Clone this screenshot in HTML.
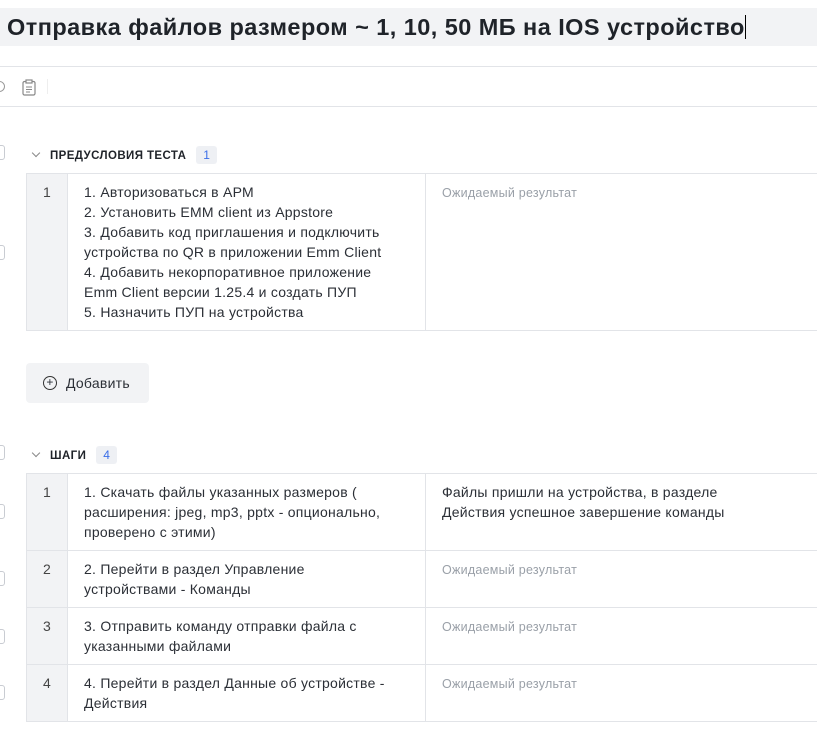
<!DOCTYPE html>
<html><head><meta charset="utf-8"><style>
*{margin:0;padding:0;box-sizing:border-box}
body{width:817px;height:738px;overflow:hidden;background:#fff;font-family:"Liberation Sans","Noto Sans CJK SC",sans-serif;color:#2b2f36;position:relative}
.title{position:absolute;left:0;top:8px;width:817px;height:38px;background:#f2f3f5;font-size:23.5px;font-weight:bold;color:#1f2329;padding:6px 0 0 7px;white-space:nowrap;letter-spacing:.45px}
.cursor{display:inline-block;width:1px;height:24px;background:#000;vertical-align:-4px}
.hl{position:absolute;left:0;width:817px;height:1px;background:#e2e4e8}
.cb{position:absolute;left:-10px;width:15px;height:15px;border:1px solid #c9ccd2;border-radius:3px}
.sec{position:absolute;left:33px;font-size:11.5px;font-weight:bold;color:#1f2329;letter-spacing:.4px}
.sec .chev{display:inline-block;width:6px;height:6px;border-right:1px solid #888;border-bottom:1px solid #888;transform:rotate(45deg);margin:0 11px 3px 0}
.badge{display:inline-block;background:#eef0f4;color:#3a6ee8;font-weight:normal;font-size:12px;padding:2px 7px;margin-left:10px;border-radius:3px}
table{position:absolute;left:26px;width:800px;border-collapse:collapse;font-size:14px;line-height:20px;letter-spacing:.25px}
td{border:1px solid #e2e4e8;vertical-align:top}
td.n{width:41px;background:#f2f3f5;text-align:center;padding-top:8px;color:#444}
td.t{width:358px;padding:8px 16px}
td.r{padding:8px 16px}
.ph{color:#9aa0a8;font-size:12.5px;line-height:18px}
.btn{position:absolute;left:26px;top:363px;width:123px;height:40px;background:#f2f3f5;border-radius:4px;font-size:14px;padding:12px 0 0 40px;letter-spacing:.25px}
.btn .c{position:absolute;left:17px;top:13px;width:14px;height:14px;border:1.3px solid #333;border-radius:50%;font-size:12px;line-height:11px;text-align:center}
</style></head><body>
<div class="title">Отправка файлов размером ~ 1, 10, 50 МБ на IOS устройство<span class="cursor"></span></div>
<div class="hl" style="top:66px"></div>
<div style="position:absolute;left:-6px;top:81px;width:11px;height:11px;border:1.3px solid #999;border-radius:50%"></div>
<svg style="position:absolute;left:22px;top:79px" width="14" height="17" viewBox="0 0 14 17"><rect x="1" y="2.5" width="12" height="13.5" rx="1.5" fill="none" stroke="#888" stroke-width="1.2"/><rect x="4" y="1" width="6" height="3" fill="#fff" stroke="#888" stroke-width="1.2"/><path d="M4 8h6M4 10.5h6M4 13h4" stroke="#888" stroke-width="1.1"/></svg>
<div style="position:absolute;left:47px;top:79px;width:1px;height:15px;background:#eee"></div>
<div class="hl" style="top:106px"></div>

<div class="cb" style="top:145px"></div>
<div class="cb" style="top:245px"></div>
<div class="sec" style="top:146px"><span class="chev"></span>ПРЕДУСЛОВИЯ ТЕСТА<span class="badge">1</span></div>
<table style="top:173px"><tr style="height:157px"><td class="n">1</td><td class="t">1. Авторизоваться в АРМ<br>2. Установить EMM client из Appstore<br>3. Добавить код приглашения и подключить устройства по QR в приложении Emm Client<br>4. Добавить некорпоративное приложение<br>Emm Client версии 1.25.4 и создать ПУП<br>5. Назначить ПУП на устройства</td><td class="r"><span class="ph">Ожидаемый результат</span></td></tr></table>

<div class="btn"><span class="c">+</span>Добавить</div>

<div class="cb" style="top:445px"></div>
<div class="cb" style="top:504px"></div>
<div class="cb" style="top:571px"></div>
<div class="cb" style="top:629px"></div>
<div class="cb" style="top:685px"></div>
<div class="sec" style="top:446px"><span class="chev"></span>ШАГИ<span class="badge">4</span></div>
<table style="top:473px">
<tr style="height:77px"><td class="n">1</td><td class="t">1. Скачать файлы указанных размеров (<br>расширения: jpeg, mp3, pptx - опционально,<br>проверено с этими)</td><td class="r">Файлы пришли на устройства, в разделе<br>Действия успешное завершение команды</td></tr>
<tr style="height:57px"><td class="n">2</td><td class="t">2. Перейти в раздел Управление<br>устройствами - Команды</td><td class="r"><span class="ph">Ожидаемый результат</span></td></tr>
<tr style="height:57px"><td class="n">3</td><td class="t">3. Отправить команду отправки файла с<br>указанными файлами</td><td class="r"><span class="ph">Ожидаемый результат</span></td></tr>
<tr style="height:57px"><td class="n">4</td><td class="t">4. Перейти в раздел Данные об устройстве -<br>Действия</td><td class="r"><span class="ph">Ожидаемый результат</span></td></tr>
</table>
</body></html>
